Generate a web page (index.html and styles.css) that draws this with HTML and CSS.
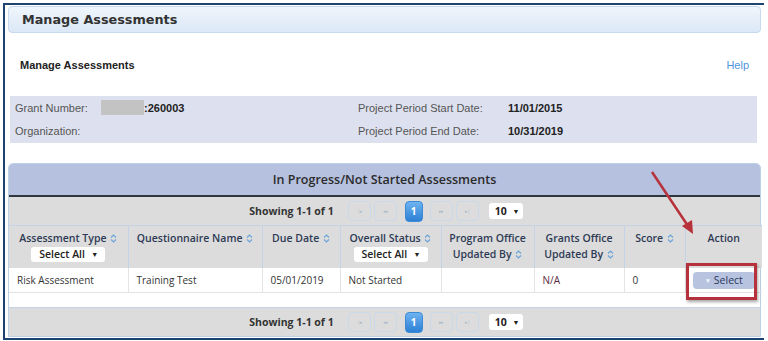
FILE: index.html
```html
<!DOCTYPE html>
<html lang="en">
<head>
    <meta charset="UTF-8">
    <meta name="viewport" content="width=device-width, initial-scale=1.0">
    <title>Manage Assessments</title>
    <link rel="stylesheet" href="styles.css">
</head>
<body>
    <div class="frame">
        <div class="page-header">Manage Assessments</div>

        <div class="sub-row">
            <span class="sub-title">Manage Assessments</span>
            <a class="help" href="#">Help</a>
        </div>

        <div class="info">
            <div class="info-row">
                <span class="info-label">Grant Number:</span>
                <span class="info-value"><span class="masked"></span>:260003</span>
                <span class="info-label info-label-right">Project Period Start Date:</span>
                <span class="info-value">11/01/2015</span>
            </div>
            <div class="info-row">
                <span class="info-label">Organization:</span>
                <span class="info-value"></span>
                <span class="info-label info-label-right">Project Period End Date:</span>
                <span class="info-value">10/31/2019</span>
            </div>
        </div>

        <div class="panel">
            <div class="panel-title">In Progress/Not Started Assessments</div>

            <div class="pager">
                <span class="pager-count">Showing 1-1 of 1</span>
                <span class="pg-btn">|&#9666;</span>
                <span class="pg-btn">&#9666;&#9666;</span>
                <span class="pg-btn pg-active">1</span>
                <span class="pg-btn">&#9656;&#9656;</span>
                <span class="pg-btn">&#9656;|</span>
                <span class="pg-size">10 <span class="caret">&#9660;</span></span>
            </div>

            <table class="grid">
                <colgroup>
                    <col style="width:119px">
                    <col style="width:134px">
                    <col style="width:78px">
                    <col style="width:101px">
                    <col style="width:93px">
                    <col style="width:90px">
                    <col style="width:61px">
                    <col style="width:77px">
                </colgroup>
                <thead>
                    <tr>
                        <th>Assessment Type <svg class="sort" width="7" height="9" viewBox="0 0 7 9"><path d="M1 3.5 L3.5 1 L6 3.5 M1 5.5 L3.5 8 L6 5.5"/></svg>
                            <div class="filter">Select All <span class="caret">&#9660;</span></div>
                        </th>
                        <th>Questionnaire Name <svg class="sort" width="7" height="9" viewBox="0 0 7 9"><path d="M1 3.5 L3.5 1 L6 3.5 M1 5.5 L3.5 8 L6 5.5"/></svg></th>
                        <th>Due Date <svg class="sort" width="7" height="9" viewBox="0 0 7 9"><path d="M1 3.5 L3.5 1 L6 3.5 M1 5.5 L3.5 8 L6 5.5"/></svg></th>
                        <th>Overall Status <svg class="sort" width="7" height="9" viewBox="0 0 7 9"><path d="M1 3.5 L3.5 1 L6 3.5 M1 5.5 L3.5 8 L6 5.5"/></svg>
                            <div class="filter">Select All <span class="caret">&#9660;</span></div>
                        </th>
                        <th>Program Office<br>Updated By <svg class="sort" width="7" height="9" viewBox="0 0 7 9"><path d="M1 3.5 L3.5 1 L6 3.5 M1 5.5 L3.5 8 L6 5.5"/></svg></th>
                        <th>Grants Office<br>Updated By <svg class="sort" width="7" height="9" viewBox="0 0 7 9"><path d="M1 3.5 L3.5 1 L6 3.5 M1 5.5 L3.5 8 L6 5.5"/></svg></th>
                        <th>Score <svg class="sort" width="7" height="9" viewBox="0 0 7 9"><path d="M1 3.5 L3.5 1 L6 3.5 M1 5.5 L3.5 8 L6 5.5"/></svg></th>
                        <th>Action</th>
                    </tr>
                </thead>
                <tbody>
                    <tr>
                        <td>Risk Assessment</td>
                        <td>Training Test</td>
                        <td>05/01/2019</td>
                        <td>Not Started</td>
                        <td></td>
                        <td class="na">N/A</td>
                        <td>0</td>
                        <td class="action"><span class="select-btn"><span class="small-caret">&#9660;</span> Select</span></td>
                    </tr>
                </tbody>
            </table>

            <div class="spacer"></div>

            <div class="pager pager-bottom">
                <span class="pager-count">Showing 1-1 of 1</span>
                <span class="pg-btn">|&#9666;</span>
                <span class="pg-btn">&#9666;&#9666;</span>
                <span class="pg-btn pg-active">1</span>
                <span class="pg-btn">&#9656;&#9656;</span>
                <span class="pg-btn">&#9656;|</span>
                <span class="pg-size">10 <span class="caret">&#9660;</span></span>
            </div>
        </div>
    </div>

    <!-- annotation overlay -->
    <svg class="callout-arrow" width="60" height="80" viewBox="0 0 60 80">
        <line x1="4" y1="4" x2="40" y2="58" stroke="#b8323c" stroke-width="2.5"/>
        <polygon points="45,66 34,58 44,52" fill="#b8323c"/>
    </svg>
    <div class="callout-box"></div>
</body>
</html>
```

FILE: styles.css
```css
body {
    margin: 0;
    font-family: "Liberation Sans", Arial, sans-serif;
    background: #fff;
    color: #333;
}

.frame {
    width: 753px;
    margin: 3px 0 0 3px;
    padding: 1px 3px 1px 3px;
    border-top: 2px solid #1f4370;
    border-left: 2px solid #1f4370;
    border-bottom: 2px solid #1f4370;
}

.page-header {
    height: 25px;
    line-height: 25px;
    padding-left: 13px;
    border: 1px solid #c6d9ee;
    border-radius: 4px;
    background: linear-gradient(#eff5fc, #dbe8f6);
    font-family: "DejaVu Sans", sans-serif;
    font-size: 12.8px;
    font-weight: bold;
    color: #333;
}

.sub-row {
    height: 63px;
    display: flex;
    align-items: center;
    justify-content: space-between;
    padding: 0 12px 0 12px;
}

.sub-title {
    font-size: 11px;
    font-weight: bold;
    color: #222;
}

.help {
    font-size: 11px;
    color: #4f95dd;
    text-decoration: none;
}

.info {
    margin: 0 4px 0 2px;
    padding-bottom: 1px;
    background: #dde1ef;
}

.info-row {
    height: 23px;
    display: flex;
    align-items: center;
    font-size: 11px;
}

.info-row > span {
    flex-shrink: 0;
}

.info-label {
    width: 86px;
    padding-left: 5px;
    color: #555;
}

.info-value {
    width: 257px;
    display: flex;
    align-items: center;
    font-weight: bold;
    color: #222;
}

.info-label-right {
    width: 150px;
    padding-left: 0;
}

.info-value:last-child {
    width: auto;
}

.masked {
    width: 43px;
    height: 15px;
    background: #c3c3c4;
    filter: blur(0.6px);
}

.panel {
    margin-top: 20px;
    border: 1px solid #bcd0e6;
    border-radius: 5px 5px 0 0;
    font-family: "Open Sans", sans-serif;
}

.panel-title {
    height: 31px;
    line-height: 31px;
    text-align: center;
    background: #b5c1de;
    border-radius: 4px 4px 0 0;
    border-bottom: 2px solid #30363f;
    font-size: 12.5px;
    font-weight: 600;
    color: #2b2b2b;
}

.pager {
    height: 28px;
    display: flex;
    align-items: center;
    justify-content: center;
    padding-left: 3px;
    background: #dcdcdc;
    font-size: 10.5px;
}

.pager-count {
    font-weight: 700;
    color: #333;
    margin-right: 14px;
}

.pg-btn {
    width: 21px;
    height: 18px;
    line-height: 18px;
    margin-right: 3px;
    border: 1px solid #cad9ea;
    border-radius: 4px;
    text-align: center;
    font-size: 5px;
    letter-spacing: -1px;
    color: #a9b9cc;
}

.pg-btn:nth-child(3) {
    margin-right: 8px;
}

.pg-active {
    width: 16px;
    height: 19px;
    margin-right: 7px;
    border-color: #3d8ad6;
    background: linear-gradient(#6db3f0, #2d80d5);
    color: #fff;
    font-size: 10px;
    font-weight: 700;
    letter-spacing: 0;
}

.pg-btn:nth-child(6) {
    margin-right: 10px;
}

.pg-size {
    width: 28px;
    height: 16px;
    line-height: 16px;
    padding-left: 6px;
    background: #fff;
    border-radius: 3px;
    font-size: 10.5px;
    font-weight: 700;
    color: #222;
}

.caret {
    font-size: 7px;
    margin-left: 3px;
    vertical-align: 1px;
}

.grid {
    width: 100%;
    table-layout: fixed;
    border-collapse: collapse;
    font-size: 10px;
}

.grid th {
    height: 38px;
    padding: 4px 2px 0;
    vertical-align: top;
    text-align: center;
    background: #dcdcdc;
    border-top: 1px solid #c4d4e6;
    border-left: 1px solid #c4d4e6;
    font-size: 10.5px;
    font-weight: 600;
    line-height: 16px;
    color: #2e3a55;
    white-space: nowrap;
}

.grid th:first-child,
.grid td:first-child {
    border-left: none;
}

.sort {
    margin-left: 1px;
    vertical-align: -1px;
    fill: none;
    stroke: #6aa3da;
    stroke-width: 1.1;
}

.filter {
    width: 66px;
    height: 15px;
    line-height: 15px;
    margin: 1px auto 0;
    padding-left: 8px;
    text-align: left;
    background: #fff;
    border-radius: 3px;
    font-size: 10.5px;
    color: #222;
}

.filter .caret {
    float: right;
    margin-right: 7px;
    vertical-align: 0;
}

.grid td {
    height: 24px;
    padding: 0 8px;
    border-left: 1px solid #e4e4e4;
    border-bottom: 1px solid #e2e2e2;
    color: #333;
    white-space: nowrap;
}

.grid td.na {
    color: #5b2a45;
}

.grid td.action {
    padding: 0;
    text-align: center;
}

.select-btn {
    display: inline-block;
    width: 62px;
    height: 17px;
    line-height: 17px;
    background: #b7c3df;
    border-radius: 4px;
    font-size: 10.5px;
    color: #2b3a60;
}

.small-caret {
    font-size: 6.5px;
    color: #f2f5fb;
    vertical-align: 1px;
}

.spacer {
    height: 14px;
}

.pager-bottom {
    border-top: 1px solid #c4d4e6;
}

.callout-arrow {
    position: absolute;
    left: 648px;
    top: 168px;
}

.callout-box {
    position: absolute;
    left: 686px;
    top: 263px;
    width: 65px;
    height: 31px;
    border: 3px solid #b5313c;
    box-shadow: 1px 2px 3px rgba(0, 0, 0, 0.35);
}
```
